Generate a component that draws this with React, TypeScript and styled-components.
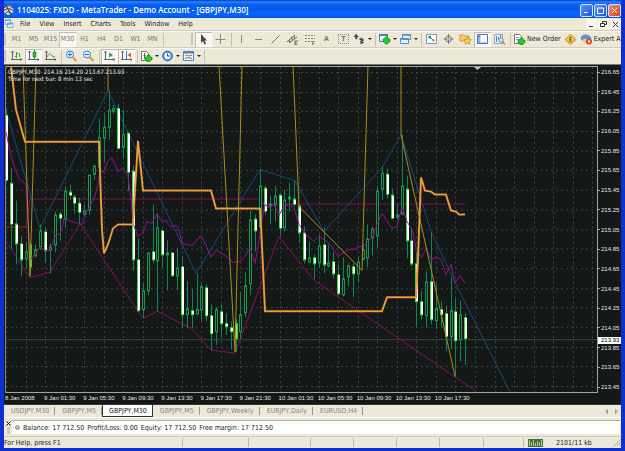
import React from "react";
import styled, { createGlobalStyle, css } from "styled-components";

const GlobalStyle = createGlobalStyle`
  * { box-sizing: border-box; }
  html, body { margin: 0; padding: 0; }
  body { background: #ece9d8; font-family: "DejaVu Sans Condensed", "DejaVu Sans", sans-serif; font-size: 7px; color: #222; }
  button { font: inherit; color: inherit; border: 0; background: none; padding: 0; margin: 0; }
`;

const Frame = styled.div`
  min-height: 100vh;
  display: flex;
  flex-direction: column;
  overflow: hidden;
  background: #ece9d8;
  border: solid #0f2fd0;
  border-width: 0 4px 3px 4px;
`;

const TitleBar = styled.header`
  height: 18px;
  margin: 0 -4px;
  padding: 2px 4px 0 2px;
  display: flex;
  align-items: center;
  background: linear-gradient(#0838b8 0, #2a86ff 2px, #0a62f4 4px, #0559e4 9px, #0466ff 14px, #0a52dc 18px);
  color: #fff;
`;

const Title = styled.h1`
  flex: 1;
  margin: 0 0 0 2px;
  font: 600 8px/12px "Open Sans", sans-serif;
  white-space: nowrap;
`;

const CaptionButton = styled.button<{ $close?: boolean }>`
  width: 13px;
  height: 13px;
  margin-left: 1px;
  display: grid;
  place-items: center;
  border: 1px solid #d4e2fb;
  border-radius: 2px;
  background: ${(p) => (p.$close ? "linear-gradient(135deg, #f09070, #d8441c)" : "linear-gradient(135deg, #5c96f6, #1c55d8)")};
`;

const MenuBar = styled.nav`
  height: 12px;
  display: flex;
  align-items: center;
`;

const MenuItem = styled.button`
  margin-left: 3px;
  padding: 0 3px;
  line-height: 10px;
`;

const Spacer = styled.div`
  flex: 1;
`;

const ChildButton = styled.button`
  width: 11px;
  height: 10px;
  margin-left: 1px;
  display: grid;
  place-items: center;
  background: #f7f6ef;
`;

const ToolRow = styled.div`
  height: 17px;
  display: flex;
  align-items: center;
  flex-shrink: 0;
  overflow: hidden;
  border-top: 1px solid #d2cebb;
  box-shadow: inset 0 1px #f8f7f0;
`;

const Grip = styled.div`
  width: 3px;
  height: 12px;
  margin: 0 1px 0 0;
  flex-shrink: 0;
  border-left: 2px solid #c9c5b2;
`;

const Separator = styled.div`
  width: 1px;
  height: 13px;
  margin: 0 1px 0 2px;
  flex-shrink: 0;
  background: #c5c1ae;
`;

const Gap = styled.div`
  width: 26px;
  flex-shrink: 0;
`;

const ToolButton = styled.button<{ $pressed?: boolean; $wide?: boolean }>`
  width: ${(p) => (p.$wide ? "21px" : "17px")};
  height: 15px;
  flex-shrink: 0;
  display: flex;
  align-items: center;
  justify-content: center;
  gap: 2px;
  color: #77756c;
  ${(p) =>
    p.$pressed &&
    css`
      background: #f7f6f0;
      box-shadow: inset 1px 1px #c0bdae, inset -1px -1px #fff;
    `}
`;

const TextButton = styled.button`
  height: 15px;
  flex-shrink: 0;
  display: flex;
  align-items: center;
  gap: 1px;
  padding: 0 1px;
  white-space: nowrap;
`;

const Caret = styled.i`
  border: solid transparent;
  border-width: 2px 2px 0;
  border-top-color: #222;
`;

const ChartPane = styled.main`
  flex: 1;
  min-height: 160px;
  display: grid;
  grid-template-columns: minmax(0, 1fr) 23px;
  grid-template-rows: minmax(0, 1fr) 11px;
  padding: 1px 0 0 1px;
  border-top: 1px solid #77756c;
  background: #141817;
  color: #e8e8e8;
  font: 6px/8px "Liberation Sans", sans-serif;
`;

const PlotArea = styled.div`
  position: relative;
  min-height: 0;
  border: 1px solid #a5a5a0;
  border-left-color: #80807c;
`;

const PlotSvg = styled.svg`
  position: absolute;
  inset: 0;
  width: 100%;
  height: 100%;
  display: block;
`;

const PlotCaption = styled.div`
  position: absolute;
  top: 1px;
  left: 2px;
  font-family: "DejaVu Sans Condensed", "DejaVu Sans", sans-serif;
  line-height: 7px;
  white-space: pre;
`;

const PriceScale = styled.div`
  position: relative;
  display: flex;
  flex-direction: column;
  justify-content: space-between;
  padding: 2px 0;
`;

const Price = styled.span`
  display: flex;
  align-items: center;
  gap: 1px;
  &::before { content: ""; width: 2px; height: 1px; background: #a5a5a0; }
`;

const LastPrice = styled.span`
  position: absolute;
  top: 83%;
  left: 0;
  right: 0;
  padding-left: 3px;
  line-height: 7px;
  background: #fff;
  color: #000;
`;

const TimeScale = styled.div`
  display: flex;
  grid-column: 1 / -1;
  padding-top: 1px;
`;

const Time = styled.span`
  flex: 0 0 6.345%;
  width: 0;
  white-space: nowrap;
`;

const TabBar = styled.div`
  height: 14px;
  flex-shrink: 0;
  display: flex;
  align-items: flex-start;
  border-top: 1px solid #333;
  border-bottom: 1px solid #fff;
  color: #86847a;
`;

const Tab = styled.button<{ $active?: boolean }>`
  height: 12px;
  display: flex;
  align-items: center;
  padding: 0 6px 0 7px;
  white-space: nowrap;
  &::after { content: ""; width: 1px; height: 8px; margin: 0 -6px 0 5px; background: ${(p) => (p.$active ? "transparent" : "#99978b")}; }
  ${(p) =>
    p.$active &&
    css`
      background: #fff;
      color: #111;
      box-shadow: inset -1px -1px #333, inset 1px 0 #333;
    `}
`;

const TabScroll = styled.button`
  width: 10px;
  height: 12px;
  display: grid;
  place-items: center;
`;

const Terminal = styled.section`
  height: 18px;
  flex-shrink: 0;
  display: flex;
  align-items: center;
  padding-right: 1px;
`;

const TerminalEdge = styled.div`
  width: 8px;
  height: 14px;
  display: flex;
  flex-direction: column;
  align-items: center;
  justify-content: space-between;
  &::after { content: ""; width: 3px; height: 7px; background: #d2cebd; }
`;

const Account = styled.div`
  flex: 1;
  height: 14px;
  display: flex;
  align-items: center;
  gap: 3px;
  padding-left: 3px;
  background: #fff;
  border-top: 1px solid #b4b1a2;
  white-space: nowrap;
`;

const Dot = styled.i`
  width: 5px;
  height: 5px;
  border-radius: 50%;
  background: #bbb;
  border: 1px solid #999;
`;

const StatusBar = styled.footer`
  height: 12px;
  flex-shrink: 0;
  display: flex;
  align-items: center;
  border-top: 1px solid #cfccba;
`;

const Help = styled.span`
  flex: 1;
  white-space: nowrap;
`;

const StatusCell = styled.span<{ $width: number }>`
  width: ${(p) => p.$width}px;
  height: 9px;
  display: flex;
  align-items: center;
  border-left: 1px solid #bcb9a8;
`;

const Traffic = styled.span`
  flex: 1;
  padding-left: 13px;
  white-space: nowrap;
`;

const IconSvg = styled.svg`
  display: block;
  flex-shrink: 0;
`;

const Page = () => <path d="M1.5 1.5h5l2 2v7h-7z" fill="#fff" stroke="#777" />;
const Plus = ({ x, y }: { x: number; y: number }) => (
  <path d={`M${x} ${y + 2}h2v-2h3v2h2v3h-2v2h-3v-2h-2z`} fill="#2fc52f" stroke="#138a13" strokeWidth=".6" />
);
const Axes = () => <path d="M2.5 1v9M1 9.5h11M1.5 2.5l1-1.500 1 1.500M10.500 8.500l1.500 1-1.500 1" stroke="#5c6470" />;

const drawings: Record<string, React.ReactNode> = {
  cursor: <path d="M4 1v9l2-2 1.500 3.500 1.500-.7L7.500 7.500H10z" fill="#444" />,
  cross: <path d="M6.500 1v10M1.500 6.500h10" stroke="#8b897f" />,
  vline: <path d="M6.500 2v8" stroke="#8b897f" />,
  hline: <path d="M3 6.500h7" stroke="#8b897f" />,
  trend: <path d="M2.500 10.500l8-8" stroke="#77756c" />,
  channel: (
    <g stroke="#66645c">
      <path d="M1 9l8-7M3 10l8-6M3 7l1 3M5 4l2 4M8 3l1 3" />
      <path d="M12 8h-3v4h3M9 10h2" />
    </g>
  ),
  fibo: (
    <g stroke="#8b897f">
      <path d="M2 2.500h10M2 5.500h10M2 8.500h7" strokeDasharray="2 1" />
      <path d="M9.500 12V8.500H12M9.500 10.500h2" />
    </g>
  ),
  arrows: <path d="M1 4l2-3 2.500 3H4v2H2.500V4zM6 6l2.500-1L11 7l-2 1.500M7 8l1 3 3-1.500z" fill="#444" stroke="#444" strokeWidth=".4" />,
  newChart: (
    <>
      <path d="M1.500 1.500h8v7h-8z" fill="#e8f1fc" stroke="#4f7fb8" />
      <path d="M1 2h9" stroke="#4f7fb8" strokeWidth="2" />
      <Plus x={5} y={4} />
    </>
  ),
  windows: (
    <g fill="#e5effb" stroke="#5b8cc4">
      <path d="M3.500 1.500h8v5h-8zM1.500 5.500h8v5h-8z" />
      <path d="M3 2h9M1 6h9" strokeWidth="1.500" />
    </g>
  ),
  market: (
    <>
      <path d="M1.500 1.500h10v9h-10z" fill="#fff" stroke="#6f9cd0" />
      <path d="M3.500 3h2.500v2.500H3.500z" fill="#26a04a" />
      <path d="M5 4l4 4" stroke="#217c38" />
      <path d="M7.500 6.500h2v2h-2z" fill="#e35a2c" />
    </>
  ),
  target: (
    <g stroke="#77756c">
      <circle cx="6.500" cy="6" r="3" />
      <path d="M6.500 1v10M1.500 6h10" />
      <path d="M5.500 6h2" stroke="#ece9d8" />
    </g>
  ),
  stars: (
    <g fill="#f6d25c" stroke="#b78a20" strokeWidth=".7">
      <path d="M1 2h4l1 1h4v5H1z" />
      <path d="M8.500 4l1.200 2.400 2.600.3-1.900 1.800.5 2.700-2.400-1.300L6 11.200l.5-2.700L4.700 6.700l2.600-.3z" />
    </g>
  ),
  navigator: (
    <>
      <path d="M1.500 1.500h10v9h-10z" fill="#fff" stroke="#4a76be" />
      <path d="M2 2h2.500v8H2z" fill="#8cb0e8" />
      <path d="M2.500 3.500h1" stroke="#b32020" />
      <path d="M5 9.500h6" stroke="#b8cbe8" />
    </>
  ),
  tester: (
    <>
      <path d="M1.500 1.500h8v9h-8z" fill="#eaf1fa" stroke="#91a9c9" />
      <path d="M3.500 3v6M5.500 4v3M7.500 2v4" stroke="#4d7fba" />
      <circle cx="8" cy="7" r="2.200" fill="#d9eafa" stroke="#668fb8" />
      <path d="M9.500 8.500l2.500 3" stroke="#c78a2b" strokeWidth="1.500" />
    </>
  ),
  order: (
    <>
      <Page />
      <path d="M3 4.500h3M3 6.500h4" stroke="#999" />
      <Plus x={5} y={5} />
    </>
  ),
  editor: (
    <>
      <path d="M6.500 1l5.500 5.500-5.500 5L1 6.500z" fill="#f3bd4a" stroke="#bd7f22" strokeWidth=".8" />
      <path d="M7.500 4.500H6v4h1.500M6 6.500h1" stroke="#7c4c0c" />
    </>
  ),
  expert: (
    <>
      <path d="M1 5c1-4 8-4 10 0l-1 2H2z" fill="#5793dc" stroke="#3468ae" strokeWidth=".6" />
      <path d="M3 6h6v3l-3 2-3-2z" fill="#f2cb68" />
      <circle cx="9" cy="8.500" r="3" fill="#dc4620" />
      <path d="M8 7.500h2v2H8z" fill="#fff" />
    </>
  ),
  bars: (
    <>
      <Axes />
      <path d="M6.500 2v6M5 6.500h1.500M6.500 3.500H8M9.500 3v4" stroke="#36a336" />
    </>
  ),
  candles: (
    <>
      <Axes />
      <path d="M7.500 0v9" stroke="#169a28" />
      <path d="M6 2h3v5H6z" fill="#2fc040" stroke="#127d20" strokeWidth=".6" />
    </>
  ),
  lineChart: (
    <>
      <Axes />
      <path d="M3 7c2-4 3-4 5-1l3 1" stroke="#4d9d50" />
    </>
  ),
  zoomIn: (
    <>
      <circle cx="5" cy="4.500" r="3.500" fill="#dff1ff" stroke="#3680d6" />
      <path d="M3 4.500h4M5 2.500v4" stroke="#1c6bc8" />
      <path d="M8 7.500l3.500 3.500" stroke="#d99b24" strokeWidth="2" />
    </>
  ),
  zoomOut: (
    <>
      <circle cx="5" cy="4.500" r="3.500" fill="#dff1ff" stroke="#3680d6" />
      <path d="M3 4.500h4" stroke="#1c6bc8" />
      <path d="M8 7.500l3.500 3.500" stroke="#d99b24" strokeWidth="2" />
    </>
  ),
  scroll: (
    <>
      <Axes />
      <path d="M6 2.500l4 2.500-4 2.500z" fill="#2aa63a" />
    </>
  ),
  shift: (
    <>
      <Axes />
      <path d="M6.500 1v8" stroke="#3d78bd" />
      <path d="M11 2.500L7.500 5 11 7.500z" fill="#dd6026" />
    </>
  ),
  indicators: (
    <>
      <Page />
      <path d="M5.500 3.500h-1v5M3.500 5.500h2" stroke="#555" />
      <Plus x={5} y={5} />
    </>
  ),
  clock: (
    <>
      <circle cx="6.500" cy="6" r="4.800" fill="#4c92e8" stroke="#2360b4" />
      <circle cx="6.500" cy="6" r="3.200" fill="#e9f4ff" />
      <path d="M6.500 3.500V6H9" stroke="#245a9c" />
    </>
  ),
  template: (
    <>
      <path d="M1.500 1.500h10v9h-10z" fill="#eef5fd" stroke="#4f86c8" />
      <path d="M1 2.500h11" stroke="#4f86c8" strokeWidth="2" />
      <path d="M3 6l2-1 2 1 3-1" stroke="#d0632a" />
      <path d="M3 8.500l3-1 4 1" stroke="#36a04a" />
    </>
  ),
  app: (
    <>
      <circle cx="6.500" cy="6" r="5" fill="#d6d6d6" />
      <path d="M2 4c3-3 6-3 9 0M1.500 7c3-3 7-3 10 0M3 10c2-3 5-3 7 0M4 1l5 10" stroke="#333" />
    </>
  ),
  child: (
    <g fill="#e8f2ff" stroke="#5e94d2">
      <path d="M1.500.5h7v6h-7zM4.500 4.500h7v6h-7z" />
      <path d="M1 1.500h8M4 5.500h8" />
    </g>
  ),
};

const Icon = ({ name }: { name: string }) => (
  <IconSvg width="13" height="12" viewBox="0 0 13 12" fill="none" aria-hidden="true">
    {drawings[name]}
  </IconSvg>
);

const Glyph = ({ d, stroke = "#333" }: { d: string; stroke?: string }) => (
  <IconSvg width="7" height="7" viewBox="0 0 7 7" fill="none" stroke={stroke} aria-hidden="true">
    <path d={d} />
  </IconSvg>
);

const LabelLetter = styled.span`
  width: 11px;
  height: 10px;
  display: grid;
  place-items: center;
  border: 1px dotted #8b897f;
  font-weight: 700;
`;

const X0 = 6;
const STEP = 4.885;

/* high, low, body top, body bottom, kind (0 hollow, 1 filled, 2 highlighted) */
const candles: number[][] = [
  [109, 182, 115, 181, 1], [168, 249, 183, 225, 1], [201, 265, 224, 245, 1], [237, 277, 244, 261, 1], [243, 269, 252, 260, 0],
  [243, 275, 245, 268, 2], [245, 258, 250, 257, 0], [225, 250, 231, 248, 0], [228, 263, 232, 252, 1], [244, 274, 247, 251, 0],
  [212, 253, 215, 246, 0], [212, 241, 214, 219, 1], [187, 228, 191, 220, 0], [185, 199, 192, 196, 1], [195, 214, 197, 204, 1],
  [198, 224, 203, 213, 1], [205, 216, 211, 215, 0], [175, 215, 175, 211, 0], [165, 180, 166, 175, 0], [119, 170, 137, 168, 0],
  [114, 162, 127, 139, 0], [91, 140, 110, 128, 0], [105, 114, 108, 112, 0], [104, 150, 108, 149, 1], [110, 159, 134, 148, 0],
  [132, 191, 133, 173, 1], [166, 271, 171, 261, 1], [239, 313, 260, 312, 1], [284, 319, 291, 311, 0], [253, 296, 253, 292, 0],
  [205, 264, 252, 261, 1], [214, 312, 228, 262, 0], [229, 268, 231, 256, 1], [241, 291, 253, 256, 0], [253, 277, 253, 277, 1],
  [249, 291, 268, 277, 0], [257, 329, 267, 316, 1], [282, 329, 309, 316, 0], [290, 329, 311, 316, 1], [274, 316, 310, 315, 0],
  [283, 322, 287, 311, 0], [285, 322, 288, 317, 1], [305, 351, 316, 335, 1], [308, 346, 310, 333, 0], [305, 338, 312, 325, 1],
  [314, 336, 324, 328, 1], [322, 350, 328, 333, 1], [320, 353, 324, 340, 2], [293, 340, 315, 333, 0], [273, 318, 286, 314, 0],
  [211, 296, 220, 285, 0], [215, 252, 219, 232, 1], [170, 232, 186, 228, 0], [186, 215, 188, 212, 1], [196, 225, 204, 207, 0],
  [186, 222, 196, 205, 0], [194, 237, 195, 229, 1], [190, 232, 200, 229, 0], [183, 212, 197, 200, 0], [181, 207, 199, 205, 1],
  [205, 243, 206, 234, 1], [227, 264, 233, 261, 1], [242, 264, 258, 263, 0], [255, 280, 258, 265, 1], [235, 268, 246, 264, 0],
  [228, 274, 245, 266, 1], [245, 268, 263, 267, 0], [252, 279, 262, 275, 1], [265, 296, 275, 295, 1], [258, 297, 279, 296, 0],
  [264, 287, 266, 278, 0], [264, 298, 267, 275, 1], [257, 283, 262, 275, 0], [245, 261, 250, 260, 0], [225, 268, 239, 259, 0],
  [227, 256, 229, 239, 0], [186, 248, 191, 237, 0], [167, 200, 173, 190, 0], [169, 199, 174, 195, 1], [189, 220, 195, 219, 1],
  [205, 220, 215, 218, 0], [135, 215, 186, 215, 0], [176, 259, 189, 242, 1], [228, 267, 241, 265, 1], [253, 328, 264, 303, 1],
  [292, 320, 302, 316, 1], [272, 328, 282, 317, 0], [233, 325, 282, 321, 1], [284, 330, 309, 322, 0], [302, 328, 310, 316, 1],
  [307, 352, 314, 338, 1], [278, 350, 311, 338, 0], [299, 378, 312, 342, 1], [301, 362, 315, 341, 0], [314, 366, 318, 340, 1],
];

const orange =
  "11,66 16,110 25,142 99,142 102,230 104,254 108,245 113,229 118,225 133,225 135,190 138,141 143,191 211,191 216,209 260,209 261,225 265,312 382,312 387,298 416,298 418,260 421,178 425,191 431,192 435,195 446,195 451,211 456,212 459,215 465,215";
const yellow = [
  "23,66 30,277 36,66",
  "108,66 108,91",
  "219,66 235,353 242,66",
  "293,66 299,207 362,271 368,66",
  "401,66 401,135 455,377",
];
const blue =
  "6,110 40,229 108,91 196,274 260,170 279,176 295,181 324,232 382,168 401,135 431,232 456,285 510,393";
const lower =
  "6,242 30,278 50,273 80,224 138,312 143,319 157,312 191,329 211,351 235,354 279,237 314,281 455,378 476,392";
const average =
  "6,132 10,152 15,169 19,179 26,185 27,209 29,235 31,260 40,248 45,251 50,251 55,237 60,234 63,225 64,219 72,222 82,225 87,212 94,199 98,185 100,172 104,172 108,161 112,158 118,172 123,168 128,177 131,199 133,224 138,237 143,233 147,222 152,224 157,214 162,222 166,221 170,227 176,226 179,230 182,244 192,246 195,243 201,236 207,248 211,258 216,251 225,256 233,263 240,262 245,257 250,248 255,264 259,242 261,225 265,205 269,208 274,205 279,216 283,208 288,205 294,208 299,225 307,236 314,242 319,237 327,242 332,247 338,257 348,250 354,250 358,247 363,247 368,242 373,237 377,225 382,214 392,229 397,227 402,207 407,222 413,232 416,250 422,258 426,248 431,260 437,258 441,260 446,275 451,265 455,284 460,276 465,284";

const Plot = () => (
  <PlotSvg viewBox="6 67 591 326" preserveAspectRatio="none" fill="none" aria-label="GBPJPY M30 chart">
    <g stroke="#3c4546" strokeDasharray="2 3" shapeRendering="crispEdges">
      {Array.from({ length: 31 }, (_, i) => {
        const x = Math.round(X0 + i * 19.54) + 0.5;
        return <path key={i} d={`M${x} 67V393`} />;
      })}
      {Array.from({ length: 17 }, (_, i) => {
        const y = Math.round(72 + i * 19.69) + 0.5;
        return <path key={i} d={`M6 ${y}H597`} />;
      })}
    </g>
    <path d="M6 340.500H597" stroke="#40463f" shapeRendering="crispEdges" />
    <g strokeWidth="1">
      <path d="M6 227.500H26" stroke="#c01818" />
      <path d="M26 227L30 199.500H260L264 204.500H465" stroke="#8a0e55" />
      <polyline points={blue} stroke="#164a80" />
      <polyline points={lower} stroke="#8a0e66" />
    </g>
    <g shapeRendering="crispEdges">
      {candles.map(([high, low, top, bottom, kind], i) => {
        const x = Math.round(X0 + i * STEP);
        return (
          <g key={i}>
            <path d={`M${x + 0.5} ${high}V${low}`} stroke="#0f8658" />
            <rect
              x={x - 0.5}
              y={top + 0.5}
              width="2"
              height={Math.max(1, bottom - top - 1)}
              fill={kind === 1 ? "#fff" : kind === 2 ? "#b8e820" : "#141817"}
              stroke={kind === 0 ? "#129a50" : "#36dc3c"}
            />
            {kind === 1 && <path d={`M${x + 0.5} ${top + 1}V${bottom - 1}`} stroke="#fff" strokeWidth="2" />}
          </g>
        );
      })}
    </g>
    <polyline points={average} stroke="#960f90" />
    {yellow.map((points) => (
      <polyline key={points} points={points} stroke="#a8901a" strokeWidth="1" />
    ))}
    <polyline points={orange} stroke="#e08424" strokeWidth="2" />
    <polyline points={orange} stroke="#f8c870" strokeWidth="1" strokeDasharray="1 1" />
    <path d="M474 67h7l-3.500 3z" fill="#b8c4c8" />
  </PlotSvg>
);

const menus = ["File", "View", "Insert", "Charts", "Tools", "Window", "Help"];
const periods = ["M1", "M5", "M15", "M30", "H1", "H4", "D1", "W1", "MN"];
const prices = Array.from({ length: 17 }, (_, i) => (216.65 - i * 0.2).toFixed(2));
const times = [
  "8 Jan 2008", "9 Jan 01:30", "9 Jan 05:30", "9 Jan 09:30", "9 Jan 13:30", "9 Jan 17:30",
  "9 Jan 21:30", "10 Jan 01:30", "10 Jan 05:30", "10 Jan 09:30", "10 Jan 13:30", "10 Jan 17:30",
];
const tabs = ["USDJPY,M30", "GBPJPY,M5", "GBPJPY,M30", "GBPJPY,M5", "GBPJPY,Weekly", "EURJPY,Daily", "EURUSD,H4"];
const account = ["Balance: 17 712.50", "Profit/Loss: 0.00", "Equity: 17 712.50", "Free margin: 17 712.50"];

const Tool = ({ name, pressed, menu }: { name: string; pressed?: boolean; menu?: boolean }) => (
  <ToolButton aria-label={name} $pressed={pressed} $wide={menu}>
    <Icon name={name} />
    {menu && <Caret />}
  </ToolButton>
);

export default function App() {
  return (
    <Frame>
      <GlobalStyle />
      <TitleBar>
        <Icon name="app" />
        <Title>1104025: FXDD - MetaTrader - Demo Account - [GBPJPY,M30]</Title>
        <CaptionButton aria-label="Minimize"><Glyph d="M1 5.500h4" stroke="#fff" /></CaptionButton>
        <CaptionButton aria-label="Maximize"><Glyph d="M.5 1h6M.5 1v5.500h6V1" stroke="#fff" /></CaptionButton>
        <CaptionButton aria-label="Close" $close><Glyph d="M1 1l5 5M6 1L1 6" stroke="#fff" /></CaptionButton>
      </TitleBar>
      <MenuBar>
        <IconSvg width="10" height="10" viewBox="0 0 13 12" fill="none">{drawings.child}</IconSvg>
        {menus.map((m) => <MenuItem key={m}>{m}</MenuItem>)}
        <Spacer />
        <ChildButton aria-label="Minimize chart"><Glyph d="M1 5.500h4" /></ChildButton>
        <ChildButton aria-label="Restore chart"><Glyph d="M2.500 2.500v-2h4v3h-2M.5 2.500h4v3h-4z" /></ChildButton>
        <ChildButton aria-label="Close chart"><Glyph d="M1 1l5 5M6 1L1 6" /></ChildButton>
      </MenuBar>
      <ToolRow>
        <Grip />
        {periods.map((p) => <ToolButton key={p} $pressed={p === "M30"}>{p}</ToolButton>)}
        <Separator />
        <Gap />
        <Grip />
        <Tool name="cursor" pressed />
        <Tool name="cross" />
        <Separator />
        <Tool name="vline" />
        <Tool name="hline" />
        <Tool name="trend" />
        <Tool name="channel" />
        <Tool name="fibo" />
        <ToolButton><b>A</b></ToolButton>
        <ToolButton><LabelLetter>T</LabelLetter></ToolButton>
        <Tool name="arrows" menu />
        <Separator />
        <Tool name="newChart" menu />
        <Tool name="windows" menu />
        <Separator />
        <Tool name="market" />
        <Tool name="target" />
        <Tool name="stars" />
        <Tool name="navigator" pressed />
        <Tool name="tester" />
        <Separator />
        <TextButton><Icon name="order" />New Order</TextButton>
        <Tool name="editor" />
        <TextButton><Icon name="expert" />Expert A</TextButton>
      </ToolRow>
      <ToolRow>
        <Grip />
        <Tool name="bars" />
        <Tool name="candles" pressed />
        <Tool name="lineChart" />
        <Separator />
        <Tool name="zoomIn" />
        <Tool name="zoomOut" />
        <Separator />
        <Tool name="scroll" pressed />
        <Tool name="shift" pressed />
        <Separator />
        <Tool name="indicators" menu />
        <Tool name="clock" menu />
        <Tool name="template" menu />
        <Separator />
      </ToolRow>
      <ChartPane>
        <PlotArea>
          <Plot />
          <PlotCaption>{"GBPJPY,M30  214.16 214.20 213.67 213.93\nTime for next bar: 8 min 13 sec"}</PlotCaption>
        </PlotArea>
        <PriceScale>
          {prices.map((p) => <Price key={p}>{p}</Price>)}
          <LastPrice>213.93</LastPrice>
        </PriceScale>
        <TimeScale>{times.map((t) => <Time key={t}>{t}</Time>)}</TimeScale>
      </ChartPane>
      <TabBar>
        {tabs.map((t, i) => <Tab key={i} $active={i === 2}>{t}</Tab>)}
        <Spacer />
        <TabScroll aria-label="Previous tabs"><Glyph d="M4.500 1.500l-2 2 2 2z" stroke="#999" /></TabScroll>
        <TabScroll aria-label="Next tabs"><Glyph d="M2.500 1.500l2 2-2 2z" stroke="#999" /></TabScroll>
      </TabBar>
      <Terminal>
        <TerminalEdge><Glyph d="M1.500 1.500l4 4M5.500 1.500l-4 4" stroke="#000" /></TerminalEdge>
        <Account>
          <Dot />
          {account.map((entry) => <span key={entry}>{entry}</span>)}
        </Account>
      </Terminal>
      <StatusBar>
        <Help>For Help, press F1</Help>
        <StatusCell $width={66} />
        <StatusCell $width={62} />
        <StatusCell $width={43} />
        <StatusCell $width={43} />
        <StatusCell $width={43} />
        <StatusCell $width={44} />
        <StatusCell $width={40} />
        <StatusCell $width={98}>
          <IconSvg width="19" height="8" viewBox="0 0 19 8">
            <path d="M4 0h15v8H4z" fill="#3b6f63" />
            <path d="M5.500 1v6M7.500 3v4M9.500 1v6M11.500 4v3M13.500 2v5M15.500 3v4M17.500 1v6" stroke="#cfc84e" />
          </IconSvg>
          <Traffic>2101/11 kb</Traffic>
          <Glyph d="M0 7l7-7M3 7l4-4M6 7l1-1" stroke="#aaa797" />
        </StatusCell>
      </StatusBar>
    </Frame>
  );
}
